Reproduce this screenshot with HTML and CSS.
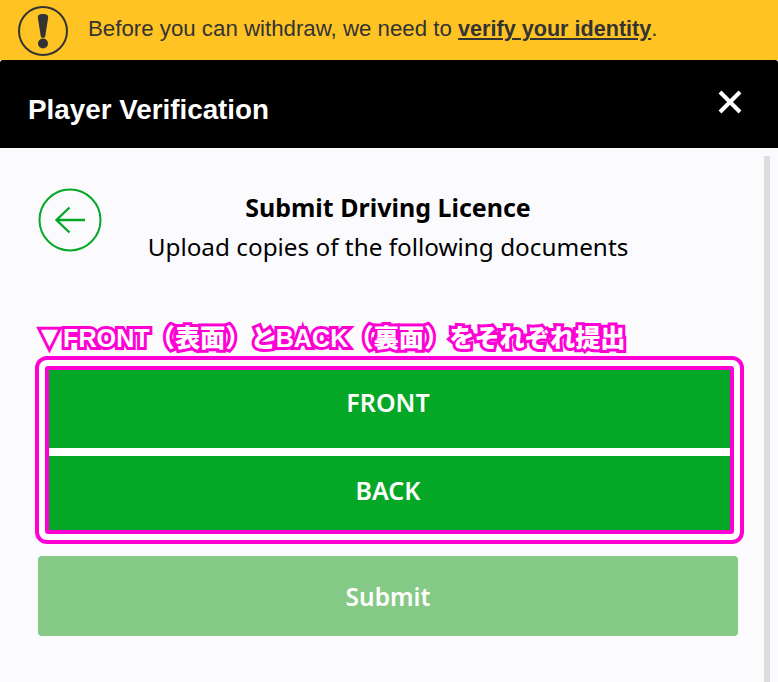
FILE: index.html
```html
<!DOCTYPE html>
<html lang="en">
  <head>
    <meta charset="UTF-8" />
    <meta name="viewport" content="width=device-width, initial-scale=1.0" />
    <title>Player Verification</title>
    <link rel="stylesheet" href="styles.css">
  </head>
  <body>
    <div class="notice">
      <svg class="notice-icon" width="52" height="52" viewBox="0 0 52 52">
        <circle cx="26" cy="26" r="24" fill="none" stroke="#333" stroke-width="2" />
        <path d="M20.800 12.500C20.800 9.500 23 9 26 9s5.200.5 5.200 3.500L28.200 31.500C28 33.200 24 33.200 23.800 31.500Z" fill="#333" />
        <circle cx="26" cy="38.500" r="5" fill="#333" />
      </svg>
      <p class="notice-text">Before you can withdraw, we need to <a href="#">verify your identity</a>.</p>
    </div>

    <div class="modal">
      <header class="modal-header">
        <h1>Player Verification</h1>
        <button type="button" class="close-button" aria-label="Close">
          <svg width="24" height="24" viewBox="0 0 24 24">
            <path d="M2 2L22 22M22 2L2 22" stroke="#fff" stroke-width="4" fill="none" />
          </svg>
        </button>
      </header>

      <div class="modal-body">
        <main class="panel">
          <div class="title-row">
            <button type="button" class="back-button" aria-label="Back">
              <svg width="64" height="64" viewBox="0 0 64 64">
                <circle cx="32" cy="32" r="30.500" fill="none" stroke="#05a826" stroke-width="2" />
                <path d="M47 32H18.500M31.500 19.500L18.500 32L31.500 44.500" fill="none" stroke="#05a826" stroke-width="2.400" />
              </svg>
            </button>
            <div class="title-text">
              <h2>Submit Driving Licence</h2>
              <p>Upload copies of the following documents</p>
            </div>
          </div>

          <p class="note" lang="ja"><span class="note-mark">▼</span>FRONT（表面）とBACK（裏面）をそれぞれ提出</p>
          <div class="mark-outer">
            <div class="mark-inner">
              <button type="button" class="doc-button doc-front">FRONT</button>
              <button type="button" class="doc-button doc-back">BACK</button>
            </div>
          </div>

          <button type="button" class="submit-button" disabled>Submit</button>
        </main>
        <div class="scrollbar"></div>
      </div>
    </div>
  </body>
</html>
```

FILE: styles.css
```css
html,
body {
  margin: 0;
  height: 682px;
  overflow: hidden;
}
body {
  display: flex;
  flex-direction: column;
  background-color: #fbfbfe;
}
h1,
h2,
p {
  margin: 0;
}
button {
  border: 0;
  padding: 0;
  background: none;
}

.notice {
  display: flex;
  align-items: center;
  flex: 0 0 60px;
  box-sizing: border-box;
  padding: 2px 0 0 17px;
  background-color: #ffc423;
  color: #333333;
}
.notice-icon {
  flex: none;
  margin-right: 19px;
}
.notice-text {
  font-family: "Liberation Sans", Arial, sans-serif;
  font-size: 22.28px;
  margin-top: -4px;
}
.notice-text a {
  color: inherit;
  font-size: 21.6px;
  font-weight: 700;
}

.modal {
  display: flex;
  flex-direction: column;
  flex: 1;
}
.modal-header {
  display: flex;
  align-items: center;
  justify-content: space-between;
  flex: 0 0 88px;
  padding: 0 36px 0 28px;
  background-color: #000000;
  border-radius: 3px 3px 0 0;
  color: #ffffff;
}
.modal-header h1 {
  font-family: "Liberation Sans", Arial, sans-serif;
  font-size: 27.8px;
  font-weight: 700;
  margin-top: 12px;
}
.close-button {
  display: flex;
  margin-top: -4px;
}

.modal-body {
  display: flex;
  flex: 1;
}
.panel {
  width: 700px;
  padding: 40px 0 0 38px;
  font-family: "Noto Sans", sans-serif;
  color: #000000;
}
.scrollbar {
  width: 6px;
  margin: 8px 0 0 26px;
  background-color: #dddddd;
}

.title-row {
  display: grid;
  grid-template-columns: 64px 1fr 64px;
  height: 64px;
}
.back-button {
  display: flex;
}
.title-text {
  text-align: center;
  padding-top: 2px;
}
.title-text h2 {
  font-size: 25px;
  font-weight: 700;
  line-height: 34px;
}
.title-text p {
  font-size: 24.3px;
  line-height: 46px;
}

.note {
  margin-top: 69px;
  font-family: "Liberation Sans", "Noto Sans CJK JP", sans-serif;
  font-size: 25.2px;
  font-weight: 900;
  line-height: 35px;
  white-space: nowrap;
  color: #ffffff;
  -webkit-text-stroke: 6px #ff00d4;
  paint-order: stroke fill;
}
.note-mark {
  display: inline-block;
  box-sizing: border-box;
  width: 25px;
  padding-left: 3px;
  font-family: "DejaVu Sans", sans-serif;
  font-size: 22px;
  line-height: 20px;
  vertical-align: 3px;
}

.mark-outer {
  margin: 0 -6px 0 -3px;
  padding: 6px;
  background-color: #ffffff;
  border: 4px solid #ff00d4;
  border-radius: 12px;
}
.mark-inner {
  display: flex;
  flex-direction: column;
  gap: 8px;
  background-color: #ffffff;
  border: 4px solid #ff00d4;
  border-radius: 3px;
}
.doc-button {
  display: block;
  width: 100%;
  padding-right: 3px;
  background-color: #05a826;
  color: #ffffff;
  font-family: "Noto Sans", sans-serif;
  font-size: 25px;
  font-weight: 600;
}
.doc-front {
  height: 78px;
  padding-bottom: 14px;
}
.doc-back {
  height: 74px;
  padding-bottom: 6px;
}

.submit-button {
  display: block;
  width: 100%;
  height: 80px;
  margin-top: 12px;
  background-color: #84c985;
  border-radius: 4px;
  color: #ffffff;
  font-family: "Noto Sans", sans-serif;
  font-size: 24.5px;
  font-weight: 600;
}
```
